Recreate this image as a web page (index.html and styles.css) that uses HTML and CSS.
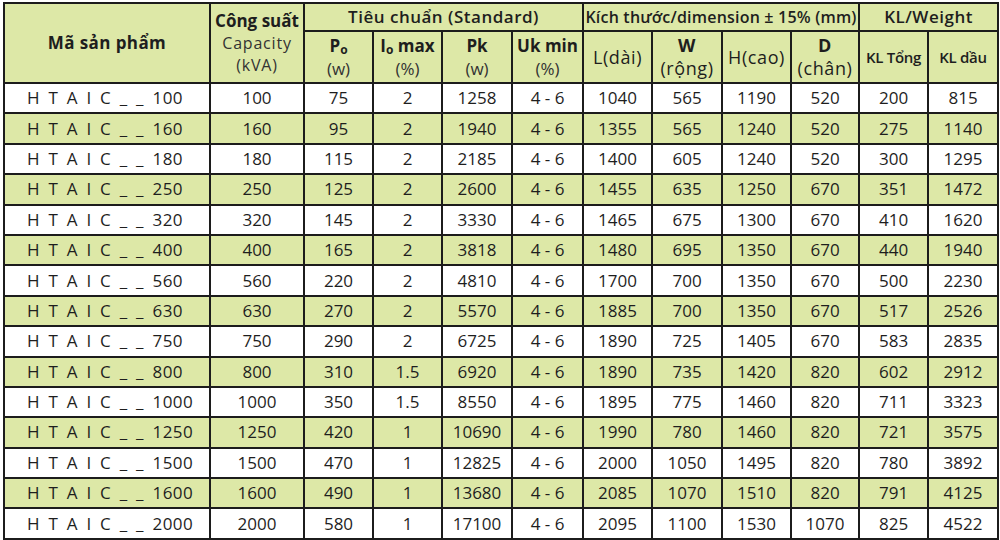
FILE: index.html
```html
<!DOCTYPE html>
<html lang="vi">
<head>
<meta charset="utf-8">
<title>Bảng thông số</title>
<link rel="stylesheet" href="styles.css">
</head>
<body>
<table class="spec">
  <colgroup>
    <col class="c-code"><col class="c-cap"><col class="c-po"><col class="c-io"><col class="c-pk"><col class="c-uk">
    <col class="c-l"><col class="c-w"><col class="c-h"><col class="c-d"><col class="c-kt"><col class="c-kd">
  </colgroup>
  <thead>
    <tr class="h1">
      <th rowspan="2" class="main">Mã sản phẩm</th>
      <th rowspan="2" class="cap"><span class="b">Công suất</span><br><span class="n">Capacity<br>(kVA)</span></th>
      <th colspan="4" class="grp">Tiêu chuẩn (Standard)</th>
      <th colspan="4" class="grp dim">Kích thước/dimension ± 15% (mm)</th>
      <th colspan="2" class="grp">KL/Weight</th>
    </tr>
    <tr class="h2">
      <th class="std"><span class="b">P<sub>o</sub></span><br><span class="n">(w)</span></th>
      <th class="std"><span class="b">I<sub>o</sub> max</span><br><span class="n">(%)</span></th>
      <th class="std"><span class="b">Pk</span><br><span class="n">(w)</span></th>
      <th class="std"><span class="b">Uk min</span><br><span class="n">(%)</span></th>
      <th class="m">L(dài)</th>
      <th class="m m2"><span class="sb">W</span><br>(rộng)</th>
      <th class="m">H(cao)</th>
      <th class="m m2"><span class="sb">D</span><br>(chân)</th>
      <th class="s">KL Tổng</th>
      <th class="s">KL dầu</th>
    </tr>
  </thead>
  <tbody>
    <tr><td class="code">H T A I C _ _ 100</td><td>100</td><td>75</td><td>2</td><td>1258</td><td>4 - 6</td><td>1040</td><td>565</td><td>1190</td><td>520</td><td>200</td><td>815</td></tr>
    <tr class="g"><td class="code">H T A I C _ _ 160</td><td>160</td><td>95</td><td>2</td><td>1940</td><td>4 - 6</td><td>1355</td><td>565</td><td>1240</td><td>520</td><td>275</td><td>1140</td></tr>
    <tr><td class="code">H T A I C _ _ 180</td><td>180</td><td>115</td><td>2</td><td>2185</td><td>4 - 6</td><td>1400</td><td>605</td><td>1240</td><td>520</td><td>300</td><td>1295</td></tr>
    <tr class="g"><td class="code">H T A I C _ _ 250</td><td>250</td><td>125</td><td>2</td><td>2600</td><td>4 - 6</td><td>1455</td><td>635</td><td>1250</td><td>670</td><td>351</td><td>1472</td></tr>
    <tr><td class="code">H T A I C _ _ 320</td><td>320</td><td>145</td><td>2</td><td>3330</td><td>4 - 6</td><td>1465</td><td>675</td><td>1300</td><td>670</td><td>410</td><td>1620</td></tr>
    <tr class="g"><td class="code">H T A I C _ _ 400</td><td>400</td><td>165</td><td>2</td><td>3818</td><td>4 - 6</td><td>1480</td><td>695</td><td>1350</td><td>670</td><td>440</td><td>1940</td></tr>
    <tr><td class="code">H T A I C _ _ 560</td><td>560</td><td>220</td><td>2</td><td>4810</td><td>4 - 6</td><td>1700</td><td>700</td><td>1350</td><td>670</td><td>500</td><td>2230</td></tr>
    <tr class="g"><td class="code">H T A I C _ _ 630</td><td>630</td><td>270</td><td>2</td><td>5570</td><td>4 - 6</td><td>1885</td><td>700</td><td>1350</td><td>670</td><td>517</td><td>2526</td></tr>
    <tr><td class="code">H T A I C _ _ 750</td><td>750</td><td>290</td><td>2</td><td>6725</td><td>4 - 6</td><td>1890</td><td>725</td><td>1405</td><td>670</td><td>583</td><td>2835</td></tr>
    <tr class="g"><td class="code">H T A I C _ _ 800</td><td>800</td><td>310</td><td>1.5</td><td>6920</td><td>4 - 6</td><td>1890</td><td>735</td><td>1420</td><td>820</td><td>602</td><td>2912</td></tr>
    <tr><td class="code">H T A I C _ _ 1000</td><td>1000</td><td>350</td><td>1.5</td><td>8550</td><td>4 - 6</td><td>1895</td><td>775</td><td>1460</td><td>820</td><td>711</td><td>3323</td></tr>
    <tr class="g"><td class="code">H T A I C _ _ 1250</td><td>1250</td><td>420</td><td>1</td><td>10690</td><td>4 - 6</td><td>1990</td><td>780</td><td>1460</td><td>820</td><td>721</td><td>3575</td></tr>
    <tr><td class="code">H T A I C _ _ 1500</td><td>1500</td><td>470</td><td>1</td><td>12825</td><td>4 - 6</td><td>2000</td><td>1050</td><td>1495</td><td>820</td><td>780</td><td>3892</td></tr>
    <tr class="g"><td class="code">H T A I C _ _ 1600</td><td>1600</td><td>490</td><td>1</td><td>13680</td><td>4 - 6</td><td>2085</td><td>1070</td><td>1510</td><td>820</td><td>791</td><td>4125</td></tr>
    <tr><td class="code">H T A I C _ _ 2000</td><td>2000</td><td>580</td><td>1</td><td>17100</td><td>4 - 6</td><td>2095</td><td>1100</td><td>1530</td><td>1070</td><td>825</td><td>4522</td></tr>
  </tbody>
</table>
</body>
</html>
```
FILE: styles.css
```css
html, body {
  margin: 0;
  padding: 0;
  background: #ffffff;
}
body {
  padding: 2px 0 0 3px;
  font-family: "Open Sans", "DejaVu Sans", sans-serif;
  color: #1e1e1e;
}
.spec {
  border-collapse: collapse;
  table-layout: fixed;
  width: 994px;
  border: 2px solid #1c1c1c;
}
.c-code { width: 206px; }
.c-cap { width: 94px; }
.c-po { width: 69px; }
.c-io { width: 69px; }
.c-pk { width: 70px; }
.c-uk { width: 71px; }
.c-l { width: 69px; }
.c-w { width: 70px; }
.c-h { width: 69px; }
.c-d { width: 68px; }
.c-kt { width: 69px; }
.c-kd { width: 70px; }

.spec th, .spec td {
  border: 2px solid #1c1c1c;
  padding: 0;
  text-align: center;
  vertical-align: middle;
  font-size: 17px;
  line-height: 20px;
}
.spec thead th {
  background: #dde8a7;
  font-weight: 400;
}
.h1 { height: 28px; }
.h2 { height: 52px; }
.b { font-weight: 700; }
.sb { font-weight: 700; }
.n { font-weight: 400; color: #333; }

.spec thead th.main {
  font-weight: 700;
  font-size: 17px;
  letter-spacing: 0.4px;
}
.spec thead th.grp {
  font-weight: 600;
  font-size: 17px;
  letter-spacing: 0.5px;
}
.spec thead th.dim {
  font-size: 16px;
  letter-spacing: 0.2px;
}
.spec thead th.std {
  line-height: 23px;
}
.spec thead th.m {
  font-weight: 500;
  font-size: 18px;
  letter-spacing: 0.6px;
  line-height: 20px;
}
.spec thead th.m2 {
  line-height: 23px;
}
.spec thead th.s {
  font-weight: 600;
  font-size: 15px;
  letter-spacing: -0.3px;
}
.cap .b {
  font-size: 17px;
  line-height: 22px;
}
.cap .n {
  font-size: 16px;
  line-height: 22px;
  letter-spacing: 0.8px;
}
sub {
  font-size: 12px;
  line-height: 0;
  vertical-align: -2px;
}
.spec tbody tr { height: 30.4px; }
.spec tbody tr.g td { background: #dde8a7; }
.spec td.code {
  text-align: left;
  padding-left: 22px;
  letter-spacing: 0.5px;
  word-spacing: 3.5px;
  white-space: pre;
}
```
